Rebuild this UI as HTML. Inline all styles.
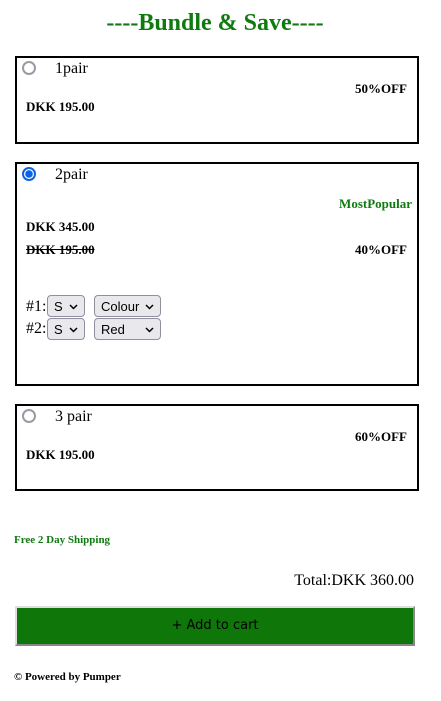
<!DOCTYPE html>
<html><head><meta charset="utf-8"><style>
*{margin:0;padding:0;box-sizing:border-box}
body{width:441px;height:701px;background:#fff;font-family:"Liberation Serif",serif;color:#000;position:relative;overflow:hidden}
.a{position:absolute;white-space:nowrap}
.box{position:absolute;left:15px;width:404px;border:2px solid #000}
.b{font-weight:bold;font-size:13px}
.radio{position:absolute;width:14px;height:14px;border-radius:50%;border:2px solid #9a9aa6;left:22px}
.sel{position:absolute;height:22px;border:1px solid #8f8f9d;border-radius:4px;background:#e9e9ed;font-family:"Liberation Sans",sans-serif;font-size:13px;padding:3px 6px}
.sel svg{position:absolute;right:6px;top:8px}
</style></head><body>
<div class="a" style="left:0;width:430px;top:10px;text-align:center;font-size:24px;font-weight:bold;color:#0f7a0f">----Bundle &amp; Save----</div>

<div class="box" style="top:56px;height:88px"></div>
<div class="radio" style="top:61px"></div>
<div class="a" style="left:55px;top:60px;font-size:16px">1pair</div>
<div class="a b" style="right:34px;top:81px">50%OFF</div>
<div class="a b" style="left:26px;top:99px">DKK 195.00</div>

<div class="box" style="top:162px;height:224px"></div>
<div class="radio" style="top:167px;border-color:#0b63e5;background:radial-gradient(circle,#0b63e5 3.5px,#fff 4px)"></div>
<div class="a" style="left:55px;top:166px;font-size:16px">2pair</div>
<div class="a b" style="right:29px;top:196px;color:#0f7a0f">MostPopular</div>
<div class="a b" style="left:26px;top:219px">DKK 345.00</div>
<div class="a b" style="left:26px;top:242px;text-decoration:line-through">DKK 195.00</div>
<div class="a b" style="right:34px;top:242px">40%OFF</div>
<div class="a" style="left:26px;top:298px;font-size:16px">#1:</div>
<div class="sel" style="left:47px;top:295px;width:38px">S<svg width="9" height="6"><path d="M1 1l3.5 3.5L8 1" stroke="#000" fill="none" stroke-width="1.5"/></svg></div>
<div class="sel" style="left:94px;top:295px;width:67px">Colour<svg width="9" height="6"><path d="M1 1l3.5 3.5L8 1" stroke="#000" fill="none" stroke-width="1.5"/></svg></div>
<div class="a" style="left:26px;top:320px;font-size:16px">#2:</div>
<div class="sel" style="left:47px;top:318px;width:38px">S<svg width="9" height="6"><path d="M1 1l3.5 3.5L8 1" stroke="#000" fill="none" stroke-width="1.5"/></svg></div>
<div class="sel" style="left:94px;top:318px;width:67px">Red<svg width="9" height="6"><path d="M1 1l3.5 3.5L8 1" stroke="#000" fill="none" stroke-width="1.5"/></svg></div>

<div class="box" style="top:404px;height:87px"></div>
<div class="radio" style="top:409px"></div>
<div class="a" style="left:55px;top:408px;font-size:16px">3 pair</div>
<div class="a b" style="right:34px;top:429px">60%OFF</div>
<div class="a b" style="left:26px;top:447px">DKK 195.00</div>

<div class="a" style="left:14px;top:534px;font-size:11px;font-weight:bold;color:#0f7a0f">Free 2 Day Shipping</div>
<div class="a" style="right:27px;top:572px;font-size:16px">Total:DKK 360.00</div>
<div class="a" style="left:15px;top:606px;width:400px;height:40px;background:#0f760a;border:2px solid;border-color:#ddd #888 #888 #ddd;text-align:center;line-height:36px;font-family:'DejaVu Sans','Liberation Sans',sans-serif;font-size:13px">+ Add to cart</div>
<div class="a" style="left:14px;top:671px;font-size:11px;font-weight:bold">© Powered by Pumper</div>
</body></html>
